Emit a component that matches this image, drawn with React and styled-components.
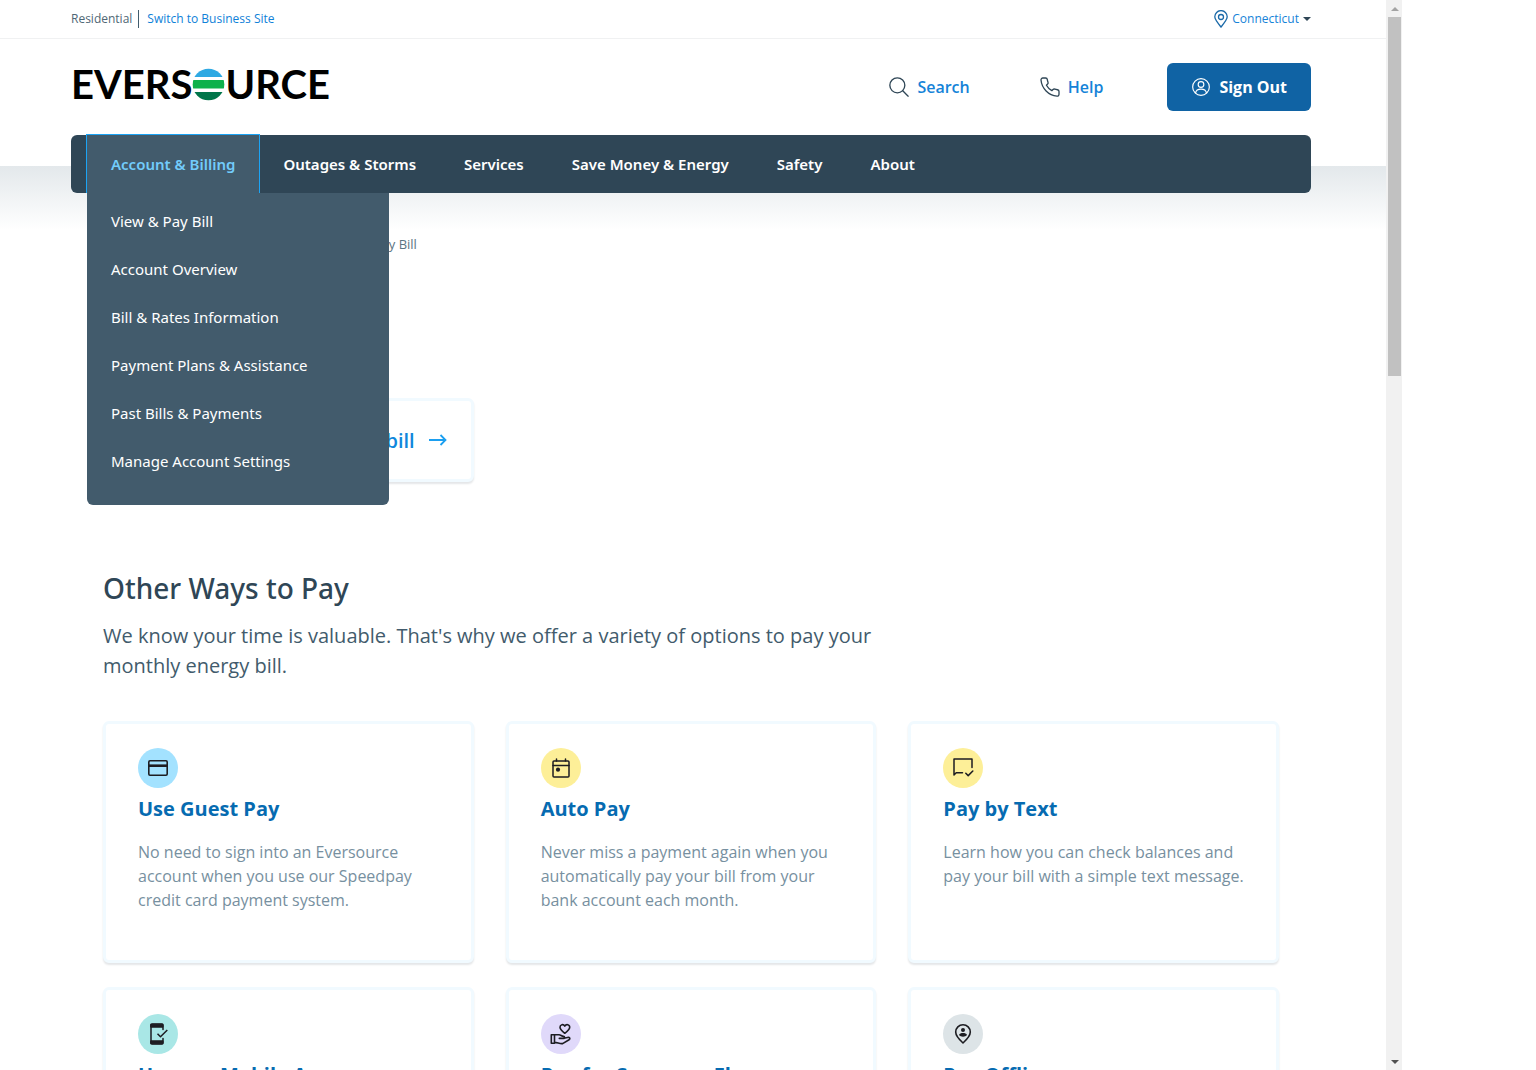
import React from "react";
import styled, { createGlobalStyle } from "styled-components";

const sans = `"Open Sans", "Noto Sans", sans-serif`;
const navSans = `"Noto Sans", "Open Sans", sans-serif`;

const GlobalStyle = createGlobalStyle`
  *, *::before, *::after { box-sizing: border-box; }
  body { margin: 0; background: #fff; font-family: ${sans}; color: #2f4656; }
  h2, h3, p, ul, ol { margin: 0; padding: 0; }
  ul, ol { list-style: none; }
  a { color: inherit; text-decoration: none; }
  button, select { font: inherit; border: 0; padding: 0; cursor: pointer; }
  svg { display: block; flex: none; }
`;

const Window = styled.div`
  display: flex;
  height: 100vh;
  padding-right: 134px;
  overflow: hidden;
`;

const Page = styled.div`
  flex: 1;
  min-width: 0;
  overflow: hidden;
`;

const Container = styled.div`
  padding: 0 75px 0 71px;
`;

const TopBar = styled(Container)`
  display: flex;
  justify-content: space-between;
  align-items: center;
  height: 39px;
  border-bottom: 1px solid #f0f1f2;
  font-size: 12px;
  line-height: 18px;
`;

const SiteSwitch = styled.div`
  display: flex;
  align-items: center;
  font-weight: 500;
`;

const CurrentSite = styled.span`
  padding-right: 6px;
  border-right: 1px solid #415c6d;
  color: #4f6775;
`;

const SiteLink = styled.a`
  padding-left: 8px;
  color: #0f81d8;
`;

const StatePicker = styled.label`
  display: flex;
  align-items: center;
  gap: 4px;
  color: #1583d8;
`;

const StateSelect = styled.select`
  appearance: none;
  field-sizing: content;
  background: transparent;
  color: inherit;
`;

const Caret = styled.svg`
  pointer-events: none;
`;

const Masthead = styled(Container)`
  display: flex;
  align-items: center;
  justify-content: space-between;
  height: 96px;
`;

const Logo = styled.a`
  display: flex;
  align-items: center;
  padding-bottom: 6px;
  font-family: Lato, sans-serif;
  font-weight: 700;
  font-size: 40px;
  line-height: 48px;
  color: #000;
`;

const Tools = styled.div`
  display: flex;
  align-items: center;
`;

const ToolLink = styled.a`
  display: flex;
  align-items: center;
  gap: 8px;
  margin-right: ${(p) => p.$gap}px;
  font-weight: 600;
  font-size: 16px;
  color: #1583d8;
  svg { color: #2f4656; }
`;

const SignOut = styled.button`
  display: flex;
  align-items: center;
  gap: 8px;
  height: 48px;
  padding: 0 24px;
  border-radius: 6px;
  background: #1063a4;
  color: #fff;
  font-weight: 700;
  font-size: 16px;
`;

const Upper = styled(Container)`
  background: linear-gradient(#e3e8eb, #fff) 0 31px / 100% 64px no-repeat;
`;

const NavBar = styled.nav`
  padding-left: 16px;
  border-radius: 6px;
  background: #2f4656;
  font-family: ${navSans};
  font-size: 15px;
  line-height: 24px;
`;

const NavList = styled.ul`
  display: flex;
`;

const NavItem = styled.li`
  position: relative;
`;

const NavLink = styled.a`
  display: flex;
  align-items: center;
  height: 58px;
  padding: 0 24px;
  font-weight: 600;
  color: ${(p) => (p.$active ? "#72ccfb" : "#fff")};
  background: ${(p) => (p.$active ? "#425b6c" : "transparent")};
  box-shadow: ${(p) => (p.$active ? "-1px 0 #1ba4f5, 1px 0 #1ba4f5, -1px -1px #1ba4f5, 1px -1px #1ba4f5" : "none")};
`;

const Menu = styled.ul`
  position: absolute;
  top: 100%;
  left: 0;
  z-index: 2;
  width: 302px;
  padding: 4px 0 20px;
  border-radius: 0 0 6px 6px;
  background: #425b6c;
`;

const MenuLink = styled.a`
  display: block;
  padding: 12px 24px;
  color: #fff;
`;

const Crumbs = styled.ol`
  display: flex;
  gap: 7px;
  padding: 40px 32px 0;
  font-size: 13px;
  line-height: 22px;
  color: #5b7482;
`;

const Main = styled.main`
  padding: 143px 107px 0 103px;
`;

const Grid = styled.div`
  display: grid;
  grid-template-columns: repeat(3, 1fr);
  gap: 24px 32px;
`;

const panel = `
  border: 3px solid #f1faff;
  border-radius: 6px;
  background: #fff;
  box-shadow: 0 2px 2px #e4e6e8;
`;

const BillLink = styled.a`
  ${panel}
  display: flex;
  align-items: center;
  justify-content: flex-end;
  gap: 14px;
  height: 84px;
  padding-right: 24px;
  font-size: 20px;
  font-weight: 600;
  color: #0f87dc;
  svg { color: #1b9ff0; }
`;

const Title = styled.h2`
  margin-top: 86px;
  font-family: ${navSans};
  font-size: 28px;
  line-height: 40px;
  font-weight: 500;
  color: #2f4656;
`;

const Lead = styled.p`
  max-width: 784px;
  margin: 13px 0 40px;
  font-size: 20px;
  line-height: 30px;
  color: #425b6c;
`;

const Card = styled.article`
  ${panel}
  height: 242px;
  padding: 24px 32px;
`;

const Badge = styled.span`
  display: grid;
  place-items: center;
  width: 40px;
  height: 40px;
  border-radius: 50%;
  background: ${(p) => p.$tone};
  color: #1d1d22;
`;

const CardTitle = styled.h3`
  margin: 6px 0 16px;
  font-size: 20px;
  line-height: 30px;
  font-weight: 700;
  color: #066bb1;
`;

const CardText = styled.p`
  font-size: 16px;
  line-height: 24px;
  color: #7790a0;
`;

const ScrollTrack = styled.div`
  display: flex;
  flex-direction: column;
  width: 16px;
  padding: 0 1px 0 2px;
  background: #f1f1f1;
`;

const ScrollEnd = styled.div`
  display: grid;
  place-items: center;
  height: 17px;
  margin-top: ${(p) => (p.$last ? "auto" : "0")};
`;

const ScrollThumb = styled.div`
  height: 34%;
  max-height: 359px;
  background: #c1c1c1;
`;

const Icon = ({ size = 24, width = 1.5, children }) => (
  <svg width={size} height={size} viewBox="0 0 24 24" fill="none" stroke="currentColor" strokeWidth={width} strokeLinecap="round" strokeLinejoin="round" aria-hidden="true">
    {children}
  </svg>
);

const Globe = () => (
  <svg width="33" height="33" viewBox="0 0 33 33" aria-hidden="true">
    <clipPath id="globe"><circle cx="16.500" cy="16.500" r="15.8" /></clipPath>
    <g clipPath="url(#globe)">
      <path fill="#2ea9e3" d="M0 0h33v9H0z" />
      <path fill="#0db14b" d="M0 12h33v8.500H0z" />
      <path fill="#00764a" d="M0 24h33v9H0z" />
    </g>
  </svg>
);

const CreditCard = () => (
  <Icon width={1.6}>
    <rect x="2.800" y="4.800" width="18.400" height="14.400" rx="1.200" />
    <path d="M3 9.700h18" strokeWidth="2.600" strokeLinecap="butt" />
  </Icon>
);

const Calendar = () => (
  <Icon width={1.5}>
    <rect x="4" y="5" width="16" height="16" rx="1" />
    <path d="M4 9.500h16M7.500 3v2M16.500 3v2" />
    <circle cx="9" cy="13.700" r="2.100" fill="currentColor" stroke="none" />
  </Icon>
);

const TextMessage = () => (
  <Icon width={1.5}>
    <path d="M11.500 16.800H5.200L3 19V3h18v8.500M14.800 17.200l2.400 2.400 4.600-4.600" />
  </Icon>
);

const Mobile = () => (
  <Icon width={1.5}>
    <path d="M17 7.500V3.200Q17 2 15.800 2H6.200Q5 2 5 3.200v17.600Q5 22 6.200 22h9.600q1.200 0 1.200-1.200V16.500" />
    <path d="M5 2.200h12v3H5zM5 18.800h12v3H5z" fill="currentColor" strokeWidth="1" />
    <path d="M11.500 11.800l3 3L21.300 8" strokeLinecap="butt" />
  </Icon>
);

const HandHeart = () => (
  <Icon width={1.6}>
    <path d="M15.800 11.300c-2.600-2-4.800-3.800-4.800-6 0-3 3.500-3.600 4.800-1.200 1.300-2.400 4.900-1.800 4.900 1.200 0 2.200-2.200 4-4.900 6z" />
    <path d="M2.300 12.700h3.200v8.600H2.300zM5.500 12.700h4.500c1.800 0 2.500 1.700 4.500 1.700 1.300 0 1.500 2 0 2h-4.200M15 16.200l4.600-.9c1.500 0 1.600 1.800.5 2.400l-6.500 3.900c-3 .4-5.100-1.200-8.100-1.200" />
  </Icon>
);

const PersonPin = () => (
  <Icon width={1.6}>
    <path d="M12 21c-4.500-4-7.300-7.200-7.300-10.900a7.300 7.300 0 0 1 14.600 0c0 3.700-2.800 6.900-7.300 10.900z" />
    <circle cx="12" cy="8" r="2" fill="currentColor" stroke="none" />
    <path d="M8 13c1-2.600 7-2.600 8 0-1.800 2.300-6.200 2.300-8 0z" fill="currentColor" stroke="none" />
  </Icon>
);

const sections = ["Outages & Storms", "Services", "Save Money & Energy", "Safety", "About"];
const menu = ["View & Pay Bill", "Account Overview", "Bill & Rates Information", "Payment Plans & Assistance", "Past Bills & Payments", "Manage Account Settings"];
const cards = [
  { icon: CreditCard, tone: "#a3e2ff", title: "Use Guest Pay", text: "No need to sign into an Eversource account when you use our Speedpay credit card payment system." },
  { icon: Calendar, tone: "#fdef98", title: "Auto Pay", text: "Never miss a payment again when you automatically pay your bill from your bank account each month." },
  { icon: TextMessage, tone: "#fdef98", title: "Pay by Text", text: "Learn how you can check balances and pay your bill with a simple text message." },
  { icon: Mobile, tone: "#a9e7e6", title: "Use our Mobile App" },
  { icon: HandHeart, tone: "#e0d9fa", title: "Pay for Someone Else" },
  { icon: PersonPin, tone: "#dde4e7", title: "Pay Offline" },
];

export default function App() {
  return (
    <Window>
      <GlobalStyle />
      <Page>
        <header>
          <TopBar>
            <SiteSwitch>
              <CurrentSite>Residential</CurrentSite>
              <SiteLink href="#business">Switch to Business Site</SiteLink>
            </SiteSwitch>
            <StatePicker>
              <svg width="14" height="18" viewBox="0 0 14 18" fill="none" stroke="#1a69a8" strokeWidth="1.3" aria-hidden="true">
                <path d="M7 17C3.200 12.300.8 9.500.8 6.800a6.200 6.200 0 0 1 12.400 0C13.200 9.500 10.800 12.300 7 17z" />
                <circle cx="7" cy="7" r="2.500" />
              </svg>
              <StateSelect aria-label="State" defaultValue="Connecticut">
                <option>Connecticut</option>
              </StateSelect>
              <Caret width="8" height="4" viewBox="0 0 8 4" aria-hidden="true"><path d="M0 0h8L4 4z" fill="#2f4656" /></Caret>
            </StatePicker>
          </TopBar>
          <Masthead>
            <Logo href="#home" aria-label="Eversource">
              <span>EVERS</span>
              <Globe />
              <span>URCE</span>
            </Logo>
            <Tools>
              <ToolLink href="#search" $gap={70}>
                <Icon size={20} width={1.6}><circle cx="10" cy="10" r="9" /><path d="M16.500 16.500l6.500 6.500" /></Icon>
                Search
              </ToolLink>
              <ToolLink href="#help" $gap={64}>
                <Icon size={20} width={1.6}>
                  <path d="M22.800 17.500v3.300a2.200 2.200 0 0 1-2.400 2.200A21.500 21.500 0 0 1 1.200 3.600 2.200 2.200 0 0 1 3.400 1.200h3.200a2.200 2.200 0 0 1 2.200 1.900c.1 1 .4 2.100.8 3.100a2.200 2.200 0 0 1-.5 2.300L7.700 9.900a17.500 17.500 0 0 0 6.500 6.500l1.400-1.400a2.200 2.200 0 0 1 2.300-.5c1 .4 2 .6 3.100.8a2.200 2.200 0 0 1 1.800 2.200z" />
                </Icon>
                Help
              </ToolLink>
              <SignOut type="button">
                <Icon size={20} width={1.4}>
                  <circle cx="12" cy="12" r="10" /><circle cx="12" cy="9" r="3.400" /><path d="M5.500 19c1-6 12-6 13 0" />
                </Icon>
                Sign Out
              </SignOut>
            </Tools>
          </Masthead>
        </header>
        <Upper>
          <NavBar>
            <NavList>
              <NavItem>
                <NavLink href="#account" $active>Account &amp; Billing</NavLink>
                <Menu>
                  {menu.map((m) => <li key={m}><MenuLink href="#menu">{m}</MenuLink></li>)}
                </Menu>
              </NavItem>
              {sections.map((s) => <NavItem key={s}><NavLink href="#section">{s}</NavLink></NavItem>)}
            </NavList>
          </NavBar>
          <Crumbs>
            <li>Home</li>
            <li>Residential</li>
            <li>Account &amp; Billing</li>
            <li>View &amp; Pay Bill</li>
          </Crumbs>
        </Upper>
        <Main>
          <Grid>
            <BillLink href="#pay">
              Log in to pay your bill
              <svg width="18" height="12" viewBox="0 0 18 12" fill="none" stroke="currentColor" strokeWidth="1.800" aria-hidden="true"><path d="M0 6h16.500M11.500 1l5 5-5 5" /></svg>
            </BillLink>
          </Grid>
          <Title>Other Ways to Pay</Title>
          <Lead>We know your time is valuable. That's why we offer a variety of options to pay your monthly energy bill.</Lead>
          <Grid>
            {cards.map(({ icon: Glyph, tone, title, text }) => (
              <Card key={title}>
                <Badge $tone={tone}><Glyph /></Badge>
                <CardTitle>{title}</CardTitle>
                {text && <CardText>{text}</CardText>}
              </Card>
            ))}
          </Grid>
        </Main>
      </Page>
      <ScrollTrack aria-hidden="true">
        <ScrollEnd><svg width="8" height="4" viewBox="0 0 8 4"><path d="M4 0l4 4H0z" fill="#a3a3a3" /></svg></ScrollEnd>
        <ScrollThumb />
        <ScrollEnd $last><svg width="8" height="4" viewBox="0 0 8 4"><path d="M0 0h8L4 4z" fill="#505050" /></svg></ScrollEnd>
      </ScrollTrack>
    </Window>
  );
}
